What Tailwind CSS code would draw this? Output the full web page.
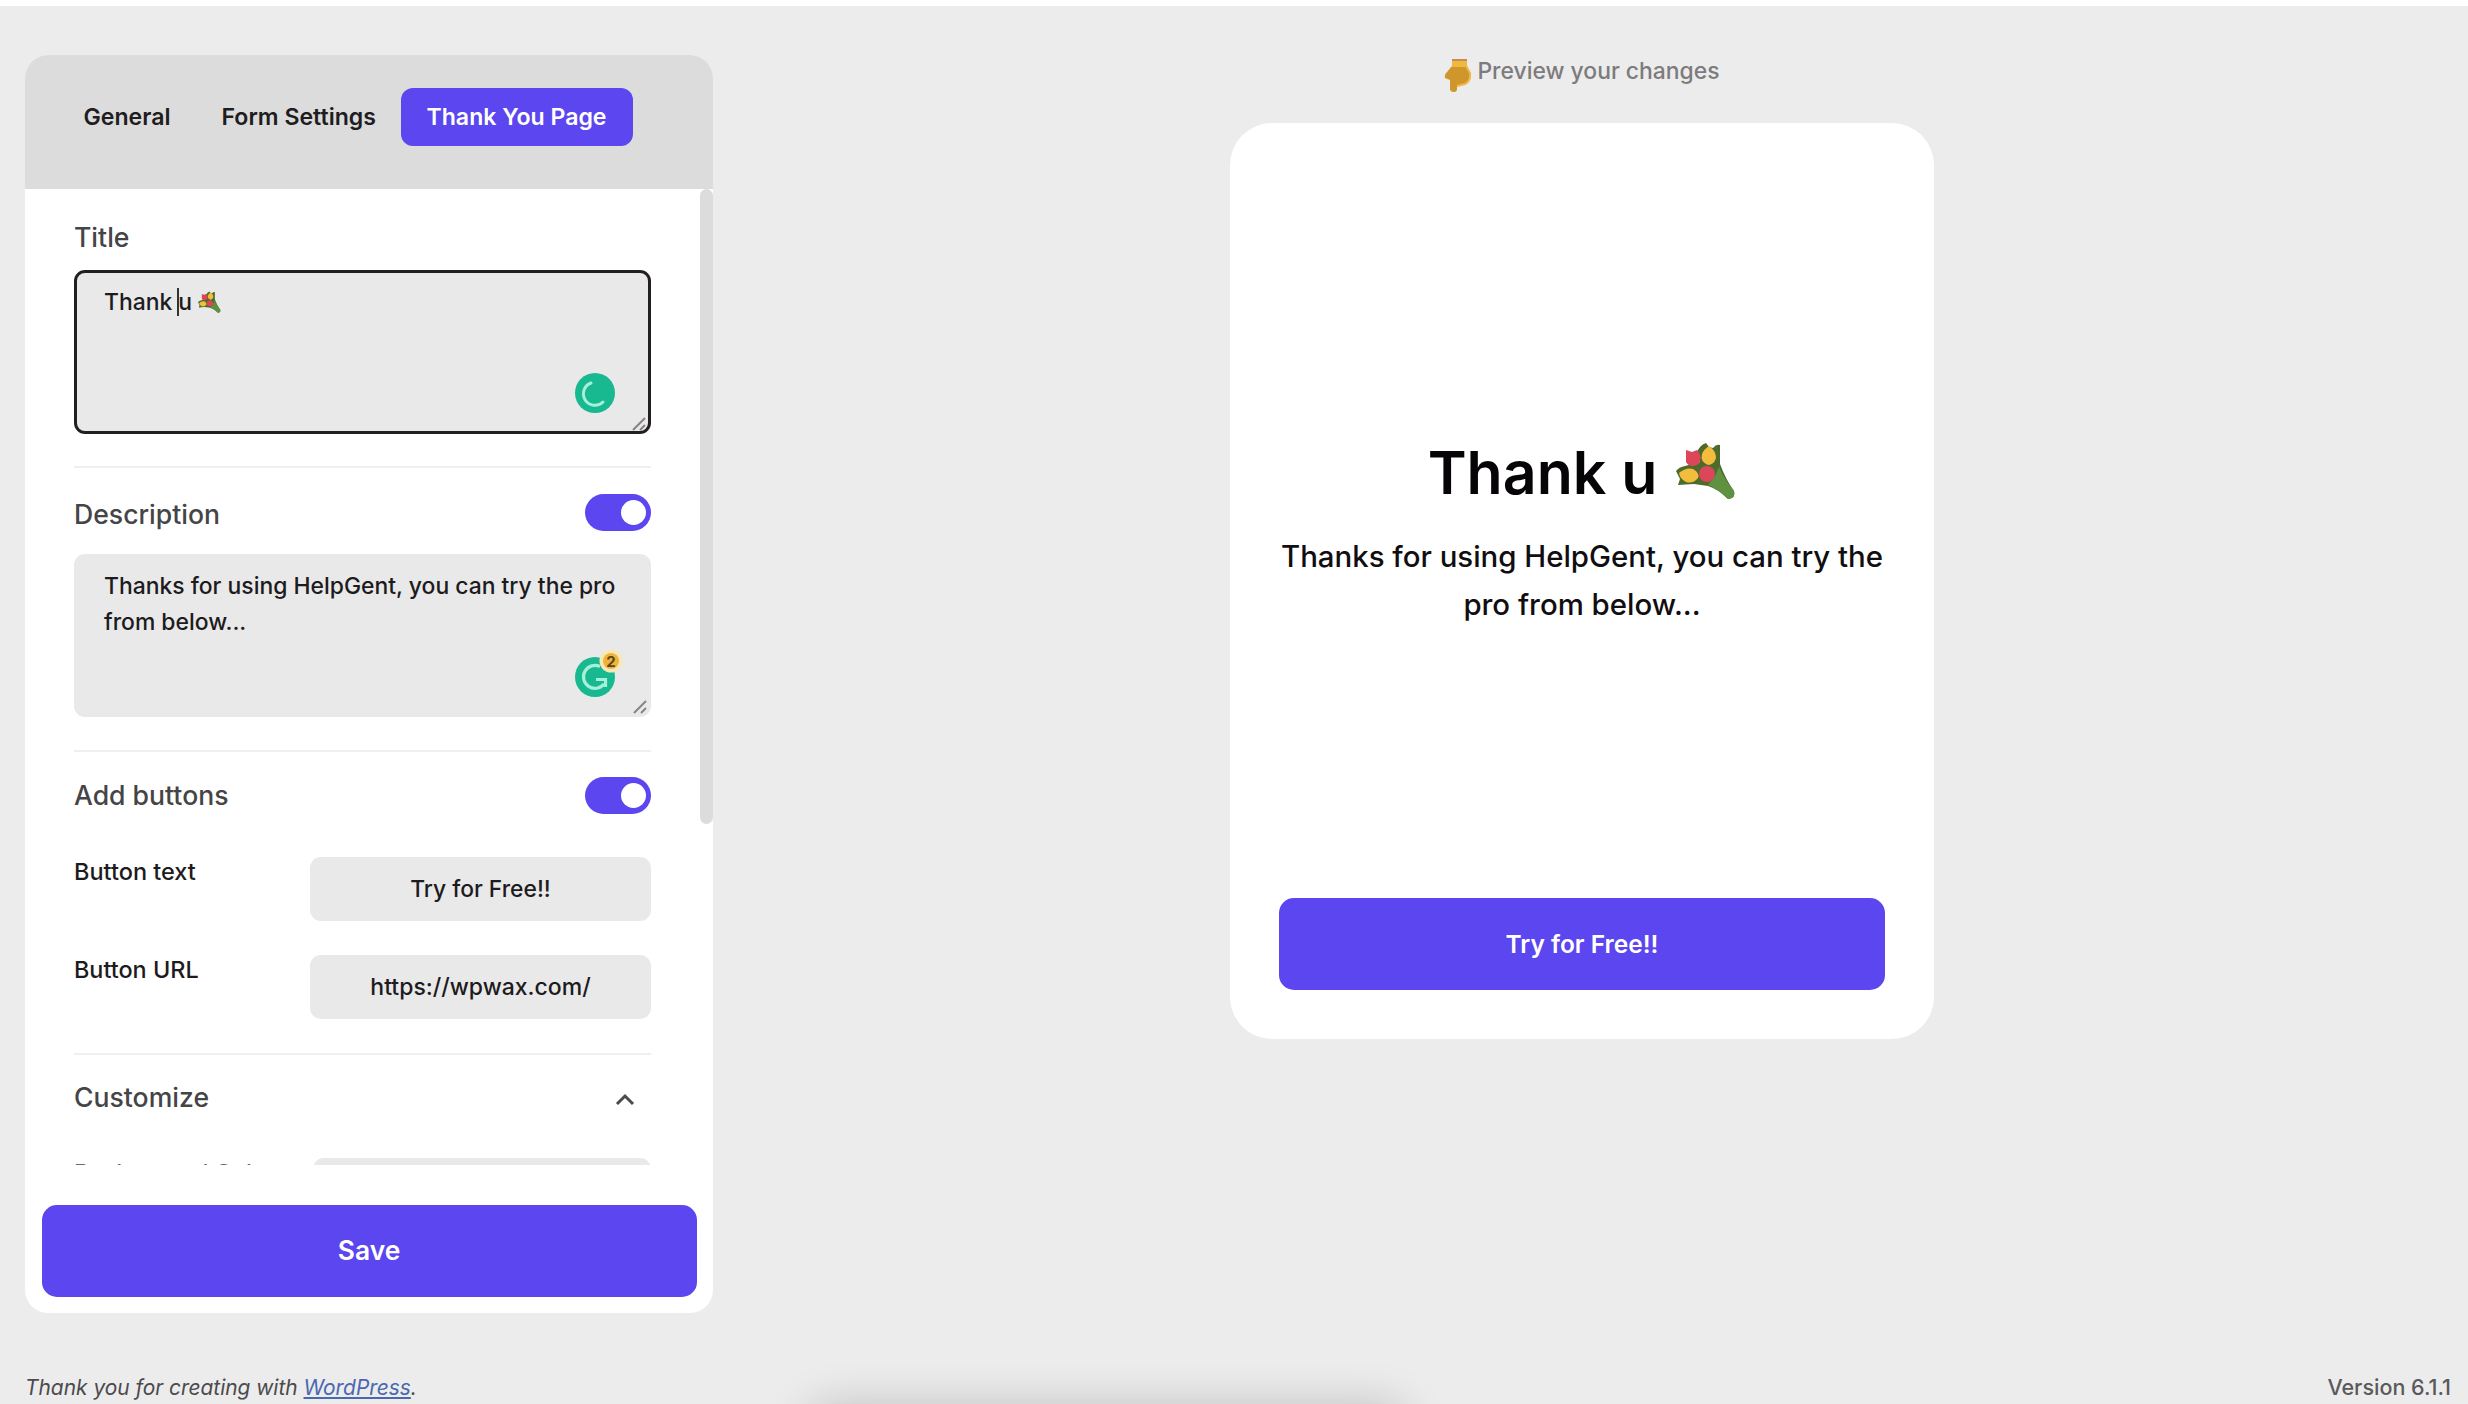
<!DOCTYPE html>
<html lang="en">
<head>
<meta charset="utf-8">
<title>Form settings</title>
<script src="https://cdn.jsdelivr.net/npm/@tailwindcss/browser@4"></script>
</head>
<body class="font-['Inter',sans-serif] antialiased">
<svg class="hidden">
  <symbol id="bouquet" viewBox="0 0 60 60">
    <path d="M21 10 Q24 3 30 1 L33 5 L37 6 Q40 2 44 3 L44 22 Q50 38 58 49 Q60 56 52 57 Q42 47 32 44 L18 42 L2 43 L4 37 L0 29 Q3 25 9 24 L24 20 Z" fill="#4c6b2c"/>
    <path d="M43 25 Q50 40 58 49 Q60 56 52 57 Q42 47 32 43 L39 34 Z" fill="#5f9140"/>
    <path d="M10 8 L16 10 L21 8 Q27 14 23 22 Q14 27 10 20 Z" fill="#dc4659"/>
    <path d="M33 4 Q40 9 40 16 Q38 23 32 23 Q24 20 26 12 Q28 7 33 4Z" fill="#f2bd3c"/>
    <path d="M3 31 Q10 25 17 27 Q24 31 22 36 Q17 42 10 40 Q4 37 3 31Z" fill="#f2bd3c"/>
    <circle cx="31" cy="32" r="8" fill="#dc4659"/>
  </symbol>
  <symbol id="grip" viewBox="0 0 14 14">
    <path d="M1 13 L13 1 M8 13 L13 8" stroke="#858588" stroke-width="2" fill="none"/>
  </symbol>
</svg>
<div class="relative flex h-[1404px] w-[2468px] flex-col overflow-hidden border-t-[6px] border-white bg-[#ececec]">
  <main class="flex h-[1308px] shrink-0 items-start">
    <!-- Settings panel -->
    <section class="ml-[25px] mt-[49px] flex h-[1258px] w-[688px] flex-col overflow-hidden rounded-[23px] bg-white">
      <nav class="flex h-[134px] shrink-0 items-start bg-[#dcdcdc] pt-[33px] text-[23.1px] font-semibold leading-[58px] text-[#1f1d1f]">
        <a class="ml-[58.500px] w-[138px]">General</a>
        <a class="w-[179px] whitespace-nowrap">Form Settings</a>
        <a class="h-[58px] w-[232px] whitespace-nowrap rounded-xl bg-[#5b46ef] text-center text-white">Thank You Page</a>
      </nav>
      <div class="flex h-[976px] shrink-0 justify-between overflow-hidden">
        <div class="ml-[49px] flex w-[577px] flex-col text-[26.6px] font-medium text-[#454446]">
          <h3 class="mt-[30px] h-9 leading-9">Title</h3>
          <div class="relative mt-[15px] h-[164px] shrink-0 rounded-[11px] border-[3px] border-[#231f21] bg-[#e9e9e9] pl-[27px] pt-[11px] text-[22.9px] leading-9 text-[#1d1b1d]">
            <div class="flex items-center"><span>Thank</span><span class="ml-[5px] h-7 w-[2px] bg-[#333]"></span><span class="-ml-px">u</span><svg class="ml-[6px] h-[23px] w-[23px]"><use href="#bouquet"/></svg></div>
            <svg class="absolute left-[497px] top-[99px] h-[42px] w-[42px]" viewBox="0 0 42 42"><circle cx="21" cy="21" r="20" fill="#18b890"/><path d="M17 11 A11.5 11.5 0 1 0 29 30" fill="none" stroke="#a5f0d9" stroke-width="3" stroke-linecap="round"/></svg>
            <svg class="absolute bottom-0 right-[2px] h-[14px] w-[14px]"><use href="#grip"/></svg>
          </div>
          <div class="mt-8 h-[2px] shrink-0 bg-[#efefef]"></div>
          <div class="mt-[26px] flex h-[37px] shrink-0 items-start justify-between">
            <h3 class="leading-10">Description</h3>
            <span class="flex h-[37px] w-[66px] items-center justify-end rounded-full bg-[#5b46ef] pr-[5px]"><i class="h-[25px] w-[25px] rounded-full bg-white"></i></span>
          </div>
          <div class="relative mt-[23px] h-[163px] shrink-0 rounded-[11px] bg-[#e9e9e9] pl-[30px] pt-[14px] text-[22.9px] leading-9 text-[#1d1b1d]">
            <p class="whitespace-nowrap">Thanks for using HelpGent, you can try the pro<br>from below...</p>
            <svg class="absolute left-[499px] top-[95px] h-[52px] w-[52px]" viewBox="0 0 52 52"><circle cx="22" cy="28" r="20" fill="#18b890"/><path d="M27 17.500 A11.500 11.500 0 1 0 31 35 M23 30.500 H32.500 V38" fill="none" stroke="#a5f0d9" stroke-width="3.200"/><circle cx="38" cy="12" r="11.500" fill="#f8e7b8"/><circle cx="38" cy="12" r="8" fill="#eeb43a"/><text x="38" y="17.500" text-anchor="middle" font-size="15" font-weight="700" fill="#5b451d">2</text></svg>
            <svg class="absolute bottom-[3px] right-[4px] h-[14px] w-[14px]"><use href="#grip"/></svg>
          </div>
          <div class="mt-[33px] h-[2px] shrink-0 bg-[#efefef]"></div>
          <div class="mt-[25px] flex h-[37px] shrink-0 items-center justify-between">
            <h3>Add buttons</h3>
            <span class="flex h-[37px] w-[66px] items-center justify-end rounded-full bg-[#5b46ef] pr-[5px]"><i class="h-[25px] w-[25px] rounded-full bg-white"></i></span>
          </div>
          <div class="mt-[43px] flex h-16 shrink-0 justify-between text-[#1d1b1d]">
            <label class="text-[23.5px] leading-[30px]">Button text</label>
            <div class="w-[341px] rounded-[11px] bg-[#e9e9e9] text-center text-[22.8px] leading-[63px]">Try for Free!!</div>
          </div>
          <div class="mt-[34px] flex h-16 shrink-0 justify-between text-[#1d1b1d]">
            <label class="text-[23.4px] leading-[30px]">Button URL</label>
            <div class="w-[341px] rounded-[11px] bg-[#e9e9e9] text-center text-[23px] leading-[64px]">https://wpwax.com/</div>
          </div>
          <div class="mt-[34px] h-[2px] shrink-0 bg-[#efefef]"></div>
          <div class="mt-[25px] flex h-9 shrink-0 items-center justify-between">
            <h3>Customize</h3>
            <svg class="mr-[16px] mt-[2px] h-[13px] w-[20px]" viewBox="0 0 20 13"><path d="M2 11 L10 3 L18 11" fill="none" stroke="#4b4a4c" stroke-width="3"/></svg>
          </div>
          <div class="mt-[42px] flex h-16 shrink-0 justify-between text-[#6b696b]">
            <label class="text-[23.4px] leading-[29px]">Background Color</label>
            <div class="w-[338px] rounded-[11px] bg-[#e9e9e9]"></div>
          </div>
        </div>
        <div class="h-[635px] w-[13px] rounded-full bg-[#dcdcdc]"></div>
      </div>
      <button class="mx-auto mt-[40px] h-[92px] w-[655px] rounded-[15px] bg-[#5b46ef] pb-px text-[26.4px] font-semibold text-white">Save</button>
    </section>

    <!-- Live preview -->
    <section class="ml-[517px] w-[704px] text-center">
      <div class="flex h-[117px] items-start justify-center pt-[50px] text-[22.9px] font-medium leading-[30px] text-[#7c7b7d]">
        <svg class="mr-[6px] mt-[2px] h-[36px] w-[27px]" viewBox="0 0 27 36"><path d="M8 8 H23 L26 15 Q27 23 21 26 L13 28 V31 Q13 34 10 34 Q6 34 6 31 V22 L1 20 Q0 17 3 14 Z" fill="#cf962b"/><path d="M22 8 L26 15 Q27 23 21 26 L13 28" stroke="#efb83e" stroke-width="2" fill="none"/><path d="M8 2 H23 V9 H8 Z" fill="#efb83e"/><path d="M8 1 H23 V3 H8 Z" fill="#c98a55"/></svg>
        <span>Preview your changes</span>
      </div>
      <div class="flex h-[916px] flex-col rounded-[42px] bg-white px-[49px] pb-[49px] text-[#100e10]">
        <h1 class="mt-[317px] flex h-[66px] items-center justify-center text-[59px] font-semibold leading-[66px] text-[#060406]"><span>Thank u</span><svg class="mb-[3px] ml-[19px] h-[60px] w-[60px]"><use href="#bouquet"/></svg></h1>
        <p class="mt-[27px] whitespace-nowrap text-[29.4px] font-medium leading-[48px]">Thanks for using HelpGent, you can try the<br>pro from below...</p>
        <button class="mt-auto h-[92px] rounded-[15px] bg-[#5b46ef] text-[24.5px] font-semibold text-white">Try for Free!!</button>
      </div>
    </section>
  </main>

  <footer class="mt-auto flex h-[34px] items-start justify-between pl-[25px] pr-[17px] leading-[35px] text-[#4b4a4c]">
    <p class="text-[20.9px] italic">Thank you for creating with <a class="text-[#4a68b0] underline">WordPress</a>.</p>
    <p class="text-[21.5px] font-medium text-[#5a595b]">Version 6.1.1</p>
  </footer>
  <div class="absolute left-[812px] top-[1404px] h-10 w-[590px] rounded-full shadow-[0_0_44px_6px_rgba(0,0,0,0.18)]"></div>
</div>
</body>
</html>
